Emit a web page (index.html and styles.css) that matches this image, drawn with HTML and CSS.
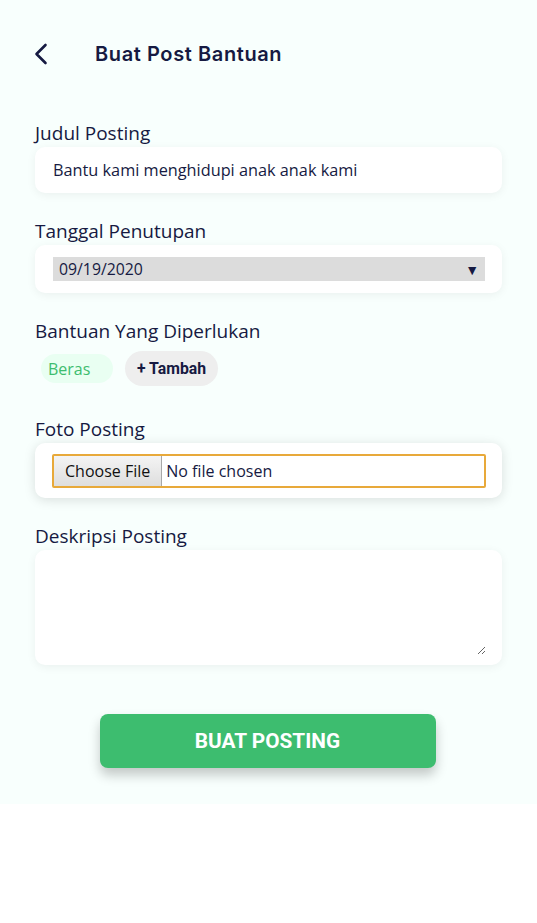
FILE: index.html
```html
<!DOCTYPE html>
<html lang="id">
<head>
<meta charset="utf-8">
<title>Buat Post Bantuan</title>
<link rel="stylesheet" href="styles.css">
</head>
<body>
<div class="page">
  <header class="header">
    <svg class="back" width="16" height="22" viewBox="0 0 16 22" aria-hidden="true">
      <path d="M12.5 2 L3.5 11 L12.5 20" fill="none" stroke="#161a42" stroke-width="2.6" stroke-linecap="round" stroke-linejoin="round"/>
    </svg>
    <h1 class="title">Buat Post Bantuan</h1>
  </header>

  <main class="form">
    <section class="field">
      <div class="label">Judul Posting</div>
      <div class="card card-text">Bantu kami menghidupi anak anak kami</div>
    </section>

    <section class="field">
      <div class="label">Tanggal Penutupan</div>
      <div class="card card-select">
        <div class="select"><span>09/19/2020</span><span class="caret">▼</span></div>
      </div>
    </section>

    <section class="field field-chips">
      <div class="label">Bantuan Yang Diperlukan</div>
      <div class="chips">
        <span class="chip chip-item">Beras</span>
        <span class="chip chip-add">+ Tambah</span>
      </div>
    </section>

    <section class="field">
      <div class="label">Foto Posting</div>
      <div class="card card-file">
        <div class="file">
          <span class="file-btn">Choose File</span>
          <span class="file-name">No file chosen</span>
        </div>
      </div>
    </section>

    <section class="field field-desc">
      <div class="label">Deskripsi Posting</div>
      <div class="card card-area">
        <textarea class="area" aria-label="Deskripsi Posting"></textarea>
      </div>
    </section>

    <div class="actions">
      <button class="submit" type="button">BUAT POSTING</button>
    </div>
  </main>
</div>
</body>
</html>
```
FILE: styles.css
```css
* { box-sizing: border-box; }
html, body { margin: 0; padding: 0; background: #ffffff; }
body { font-family: "Open Sans", "Noto Sans", sans-serif; color: #161a42; }

.page {
  background: #f8fffd;
  height: 804px;
}

.header {
  display: flex;
  align-items: center;
  height: 40px;
  padding: 34px 0 0 33px;
  box-sizing: content-box;
}
.back { display: block; }
.title {
  margin: 0 0 0 46px;
  font-family: "Inter", "Noto Sans", sans-serif;
  font-weight: 600;
  font-size: 20px;
  letter-spacing: 0.6px;
  color: #161a42;
}

.form {
  padding: 47px 35px 0 35px;
  display: flex;
  flex-direction: column;
}

.field { display: flex; flex-direction: column; margin-bottom: 26px; }
.label {
  font-size: 19px;
  line-height: 24px;
  font-weight: 500;
  margin-bottom: 2px;
  color: #161a42;
}

.card {
  background: #ffffff;
  border-radius: 10px;
  box-shadow: 0 2px 10px rgba(0, 0, 0, 0.06);
}

.card-text {
  height: 46px;
  display: flex;
  align-items: center;
  padding: 0 18px;
  font-size: 16.3px;
}

.card-select { height: 48px; padding: 12px 17px 12px 18px; }
.select {
  height: 24px;
  background: #dcdcdc;
  display: flex;
  align-items: center;
  justify-content: space-between;
  padding: 0 6px 0 6px;
  font-size: 15.8px;
}
.caret { font-size: 14px; color: #161a42; }

.chips {
  display: flex;
  align-items: center;
  gap: 12px;
  margin-top: 6px;
  padding-left: 6px;
}
.field-chips { margin-bottom: 31px; }
.chip {
  display: inline-flex;
  align-items: center;
  border-radius: 18px;
}
.chip-item {
  height: 29px;
  width: 72px;
  padding-left: 7px;
  background: #e9fff2;
  color: #3dbd6f;
  font-size: 16px;
}
.chip-add {
  height: 35px;
  padding: 0 12px;
  background: #eeeeee;
  font-family: "Roboto", sans-serif;
  font-weight: 700;
  font-size: 15.8px;
  color: #161a42;
}

.card-file {
  height: 55px;
  padding: 11px 16px 0 17px;
  box-shadow: 0 2px 12px rgba(0, 0, 0, 0.13);
}
.file {
  height: 34px;
  border: 2px solid #e8a93a;
  border-radius: 2px;
  display: flex;
  align-items: stretch;
  font-size: 16px;
}
.file-btn {
  display: flex;
  align-items: center;
  padding: 0 11px;
  background: linear-gradient(#f4f4f4, #dedede);
  border-right: 1px solid #a8a8a8;
  color: #111;
}
.file-name { display: flex; align-items: center; padding-left: 4px; color: #161a42; }

.card-area {
  height: 115px;
  padding: 10px 16px 10px 16px;
}
.area {
  display: block;
  width: 100%;
  height: 100%;
  border: none;
  outline: none;
  background: transparent;
  font-family: inherit;
  padding: 0;
}

.field-desc { margin-bottom: 49px; }

.actions { display: flex; justify-content: center; }
.submit {
  width: 336px;
  height: 54px;
  border: none;
  border-radius: 8px;
  background: #3dbd6f;
  color: #ffffff;
  font-family: "Roboto", sans-serif;
  font-weight: 700;
  font-size: 20.8px;
  box-shadow: 0 7px 12px rgba(0, 0, 0, 0.22);
  margin-right: 2px;
}
```
